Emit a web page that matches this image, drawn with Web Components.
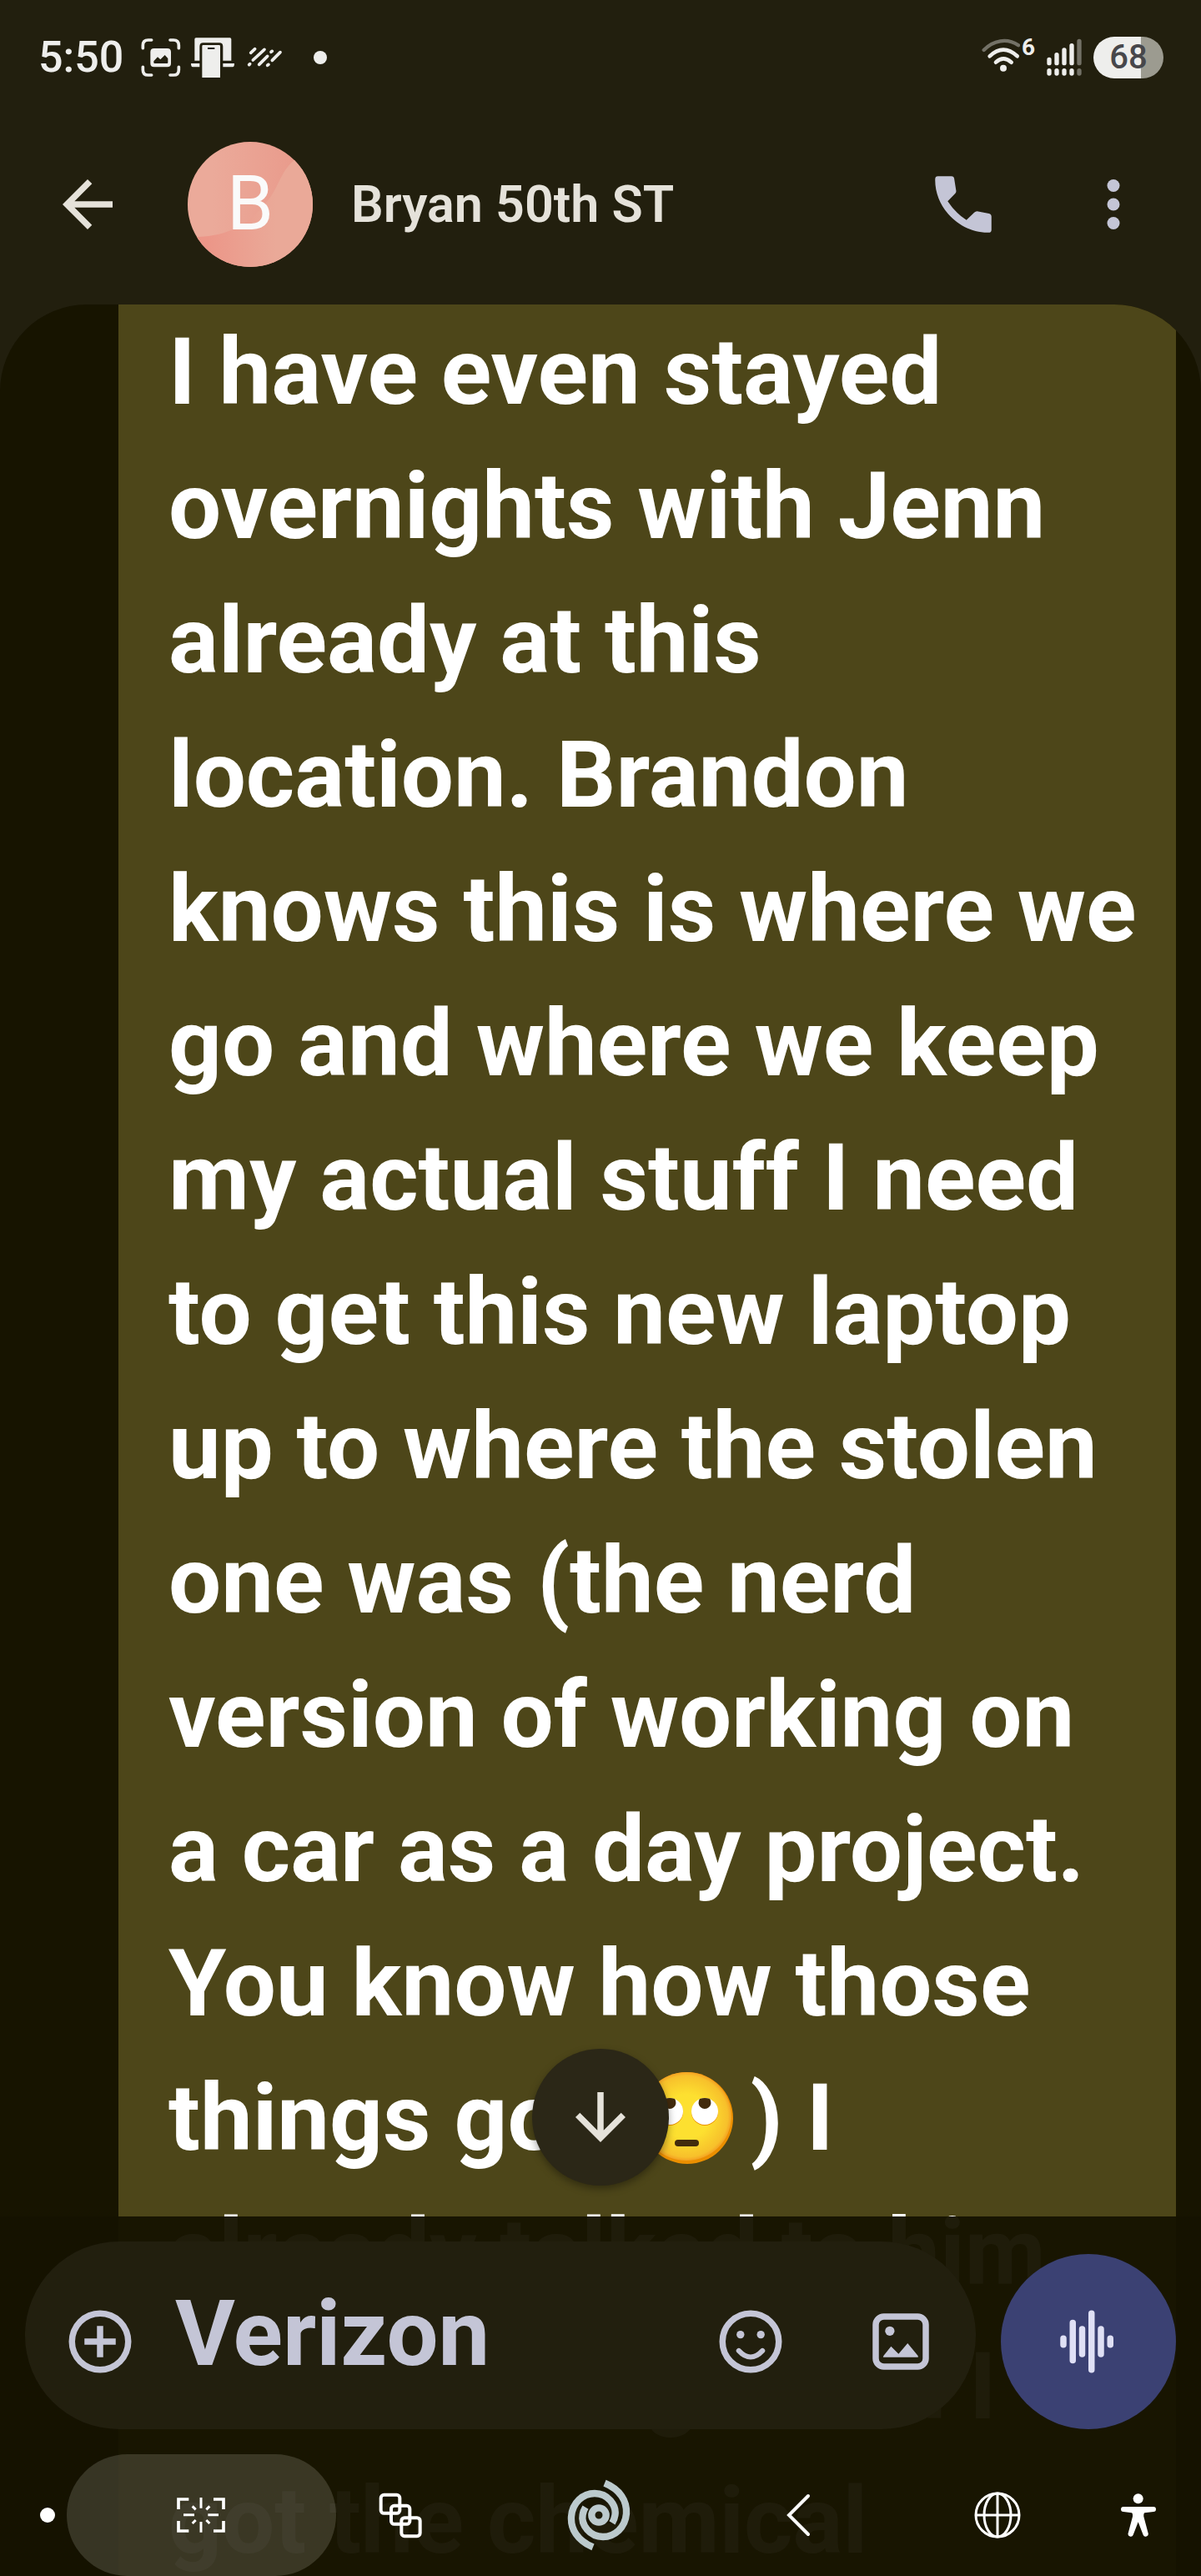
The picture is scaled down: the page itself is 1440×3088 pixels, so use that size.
<!DOCTYPE html>
<html lang="en">
<head>
<meta charset="utf-8">
<meta name="viewport" content="width=device-width, initial-scale=1">
<title>Messages</title>
<style>
body {
    margin: 0;
    background-color: #171400;
    font-family: Roboto, sans-serif;
}
</style>
</head>
<body>
<chat-screen>
    <status-bar slot="status" time="5:50" battery="68"></status-bar>
    <chat-header slot="header" initial="B">Bryan 50th ST</chat-header>
    <message-bubble>I have even stayed<br>overnights with Jenn<br>already at this<br>location. Brandon<br>knows this is where we<br>go and where we keep<br>my actual stuff I need<br>to get this new laptop<br>up to where the stolen<br>one was (the nerd<br>version of working on<br>a car as a day project.<br>You know how those<br>things go<eye-roll></eye-roll>) I<br>already talked to him<br>this morning when I<br>got the chemical</message-bubble>
    <message-composer slot="footer" placeholder="Verizon"></message-composer>
    <nav-bar slot="footer"></nav-bar>
</chat-screen>

<script>
// 24 x 24 icons shared by the header, the composer and the scroll button
const icons = {
    back: '<path d="M20 11H7.83l5.59-5.59L12 4l-8 8 8 8 1.41-1.41L7.83 13H20z"/>',
    down: '<path d="M11 4v12.17l-5.59-5.59L4 12l8 8 8-8-1.41-1.42L13 16.17V4z"/>',
    call: '<path d="M3.9 3H8.2Q9 3 9.1 3.8L9.7 7.6Q9.8 8.1 9.4 8.5L7 11Q9.5 14.8 13 17L15.5 14.6Q15.9 14.2 16.4 14.2L20.2 14.9Q21 15.1 21 15.9V20.1Q21 21 20.1 21C10.8 21.2 2.8 13 3 3.9Q3 3 3.9 3z"/>',
    more: '<circle cx="12" cy="6" r="2"/><circle cx="12" cy="12" r="2"/><circle cx="12" cy="18" r="2"/>',
    add: '<path d="M11 17h2v-4h4v-2h-4V7h-2v4H7v2h4zM12 22a10 10 0 1 1 0-20 10 10 0 0 1 0 20zm0-2a8 8 0 1 0 0-16 8 8 0 0 0 0 16z"/>',
    smile: '<circle cx="12" cy="12" r="9" fill="none" stroke="currentColor" stroke-width="2"/><circle cx="8.75" cy="9.75" r="1.25"/><circle cx="15.25" cy="9.75" r="1.25"/><path d="M8.2 14.9Q12 19 15.8 14.9" fill="none" stroke="currentColor" stroke-width="1.6" stroke-linecap="round"/>',
    image: '<rect x="4" y="4" width="16" height="16" rx="2.6" fill="none" stroke="currentColor" stroke-width="2"/><circle cx="8.5" cy="8.6" r="1.5"/><path d="M6.5 17Q6.2 17 6.5 16.5L8.9 13.5 11.3 15.9 14.2 12.5 17.5 16.5Q17.7 17 17.4 17z"/>',
    voice: '<path d="M4 11v2M7 6v12M10 8v8M13 3v18M16 8v8M19 11v2" fill="none" stroke="currentColor" stroke-width="2" stroke-linecap="round"/>'
};

class UiIcon extends HTMLElement {
    constructor() {
        super();
        this.attachShadow({mode: 'open'});
    }

    connectedCallback() {
        this.shadowRoot.innerHTML = `
<style>
:host { display: block; width: 90px; height: 90px; }
svg { display: block; width: 100%; height: 100%; fill: currentColor; }
</style>
<svg viewBox="0 0 24 24" aria-hidden="true">${icons[this.getAttribute('name')]}</svg>`;
    }
}

// Column page: bars on top, thread below, footer laid over the end of the thread
const screenTemplate = document.createElement('template');

screenTemplate.innerHTML = `
<style>
:host {
    display: flex;
    flex-direction: column;
    position: relative;
    height: 100vh;
    overflow: hidden;
    background-color: #221f0e;
}

main {
    flex: 1;
    min-height: 0;
    overflow: hidden;
    border-radius: 104px 104px 0 0;
    background-color: #171400;
    padding: 0 30px 0 142px;
}

footer {
    position: absolute;
    left: 0;
    right: 0;
    bottom: 0;
    padding-top: 30px;
    background-color: rgba(22, 19, 0, 0.96);
}

#toLatest {
    position: absolute;
    left: 50%;
    bottom: calc(100% + 37px);
    width: 164px;
    height: 164px;
    margin: 0 0 0 -82px;
    padding: 0;
    border: 0;
    border-radius: 50%;
    display: grid;
    place-items: center;
    background-color: #2b2717;
    color: #e5e2da;
    box-shadow: 0 4px 10px rgba(0, 0, 0, 0.35);
}
</style>
<slot name="status"></slot>
<slot name="header"></slot>
<main><slot></slot></main>
<footer>
    <button id="toLatest" aria-label="Scroll to latest"><ui-icon name="down"></ui-icon></button>
    <slot name="footer"></slot>
</footer>
`;

class ChatScreen extends HTMLElement {
    constructor() {
        super();
        this.attachShadow({mode: 'open'});
        this.shadowRoot.appendChild(screenTemplate.content.cloneNode(true));
    }
}

const statusTemplate = document.createElement('template');

statusTemplate.innerHTML = `
<style>
:host {
    display: flex;
    justify-content: space-between;
    align-items: center;
    box-sizing: border-box;
    height: 125px;
    padding: 13px 45px 0 46px;
    color: #eeeeec;
}

.group {
    display: flex;
    align-items: center;
    gap: 12px;
}

.right {
    gap: 14px;
}

#time {
    width: 111px;
    font-size: 52px;
    line-height: 60px;
    font-weight: 500;
}

svg {
    display: block;
    fill: currentColor;
}

.stroke {
    fill: none;
    stroke: currentColor;
    stroke-linecap: round;
}

.wifi {
    display: flex;
    align-items: flex-start;
    gap: 2px;
    height: 48px;
    font-size: 28px;
    line-height: 24px;
    font-weight: 700;
}

#battery {
    width: 84px;
    height: 50px;
    border-radius: 25px;
    background: linear-gradient(90deg, #eeeeec 68%, #9c9b90 68%);
    color: #47474b;
    font-size: 40px;
    line-height: 50px;
    font-weight: 500;
    text-align: center;
}
</style>
<div class="group">
    <span id="time"></span>
    <svg width="48" height="48" viewBox="506 136 144 144">
        <path class="stroke" stroke-width="11" d="M513 174v-10q0-19 19-19h12M611 145h12q19 0 19 19v10M642 242v10q0 19-19 19h-12M544 271h-12q-19 0-19-19v-10"/>
        <path fill-rule="evenodd" d="M553 175h48q13 0 13 13v41q0 13-13 13h-48q-13 0-13-13v-41q0-13 13-13zM552 226q0 3 3 3h45q3 0 3-3v-15l-11-12-16 16-10-9-14 15z"/>
    </svg>
    <svg width="52" height="48" viewBox="687 141 156 144">
        <path d="M705 142h122q5 0 5 5v77h-30v-51q0-13-13-13h-58q-13 0-13 13v51h-18v-77q0-5 5-5z"/>
        <path d="M687 234h31v13h-25q-6 0-6-13zM802 234h41q0 13-6 13h-35z"/>
        <path fill-rule="evenodd" d="M731 168h57q4 0 4 4v113h-65v-113q0-4 4-4zM747 177v6h25v-6z"/>
    </svg>
    <svg width="48" height="48" viewBox="883 141 144 144">
        <path class="stroke" stroke-width="11" d="M906 196l15-14M914 222l41-38M900 239l3-3M936 238l30-30M979 193l4-3M966 241l4-3M983 223l29-29"/>
    </svg>
    <svg width="62" height="48" viewBox="0 0 62 48"><circle cx="31" cy="24" r="8"/></svg>
</div>
<div class="group right">
    <div class="wifi">
        <svg width="46" height="48" viewBox="114 135 138 144">
            <path class="stroke" stroke-width="13" opacity=".4" stroke-linecap="butt" d="M122 180C155 145 205 135 246 163"/>
            <path class="stroke" stroke-width="14" d="M143 202Q192 156 242 202M165 224Q192 198 221 224"/>
            <circle cx="192" cy="245" r="12"/>
        </svg>
        <span>6</span>
    </div>
    <svg width="42" height="48" viewBox="344 135 126 144">
        <g class="stroke" stroke-width="16">
            <path d="M353 214v13M380 197v30M407 180v47M434 164v63M353 254v10M380 254v10M407 254v10M434 254v10"/>
            <path opacity=".4" d="M461 148v79M461 254v10"/>
        </g>
    </svg>
    <div id="battery"></div>
</div>
`;

class StatusBar extends HTMLElement {
    constructor() {
        super();
        this.attachShadow({mode: 'open'});
        this.shadowRoot.appendChild(statusTemplate.content.cloneNode(true));
    }

    connectedCallback() {
        this.shadowRoot.getElementById('time').textContent = this.getAttribute('time');
        this.shadowRoot.getElementById('battery').textContent = this.getAttribute('battery');
    }
}

const headerTemplate = document.createElement('template');

headerTemplate.innerHTML = `
<style>
:host {
    display: flex;
    align-items: center;
    height: 240px;
    padding: 0 15px;
    color: #e5e2da;
}

button {
    display: grid;
    place-items: center;
    width: 180px;
    height: 180px;
    padding: 0;
    border: 0;
    background: none;
    color: #c4c5d6;
}

#back {
    color: inherit;
}

#avatar {
    display: grid;
    width: 150px;
    height: 150px;
    margin: 0 46px 0 30px;
    border-radius: 50%;
    overflow: hidden;
    color: #fafafa;
    font-size: 90px;
    line-height: 150px;
    text-align: center;
}

#avatar > * {
    grid-area: 1 / 1;
}

h1 {
    flex: 1;
    margin: 0;
    font-size: 61px;
    line-height: 72px;
    font-weight: 600;
    white-space: nowrap;
}
</style>
<button id="back" aria-label="Back"><ui-icon name="back"></ui-icon></button>
<div id="avatar">
    <svg width="150" height="150" viewBox="0 0 150 150" aria-hidden="true">
        <defs>
            <linearGradient id="upper"><stop offset=".2" stop-color="#ebaa9a"/><stop offset=".9" stop-color="#e99a8b"/></linearGradient>
            <linearGradient id="lower"><stop offset=".15" stop-color="#ec9688"/><stop offset=".7" stop-color="#eaa998"/></linearGradient>
        </defs>
        <rect width="150" height="150" fill="url(#upper)"/>
        <path d="M0 114C60 116 82 88 98 68C110 52 112 34 130 20L150 0V150H0z" fill="url(#lower)"/>
    </svg>
    <span id="initial"></span>
</div>
<h1><slot></slot></h1>
<button aria-label="Call"><ui-icon name="call"></ui-icon></button>
<button aria-label="More options"><ui-icon name="more"></ui-icon></button>
`;

class ChatHeader extends HTMLElement {
    constructor() {
        super();
        this.attachShadow({mode: 'open'});
        this.shadowRoot.appendChild(headerTemplate.content.cloneNode(true));
    }

    connectedCallback() {
        this.shadowRoot.getElementById('initial').textContent = this.getAttribute('initial');
    }
}

const bubbleTemplate = document.createElement('template');

bubbleTemplate.innerHTML = `
<style>
:host {
    display: block;
    padding: 0 0 0 60px;
    background-color: #4d4619;
    color: white;
}

p {
    margin: 0;
    font-size: 112px;
    line-height: 161px;
    font-weight: 700;
    white-space: nowrap;
}
</style>
<p><slot></slot></p>
`;

class MessageBubble extends HTMLElement {
    constructor() {
        super();
        this.attachShadow({mode: 'open'});
        this.shadowRoot.appendChild(bubbleTemplate.content.cloneNode(true));
    }
}

const eyeRollTemplate = document.createElement('template');

eyeRollTemplate.innerHTML = `
<style>
:host {
    display: inline-block;
    width: 112px;
    height: 112px;
    margin: 0 20px 0 96px;
    vertical-align: -18px;
}

svg {
    display: block;
}
</style>
<svg width="112" height="112" viewBox="0 0 112 112" role="img" aria-label="Eye roll">
    <defs>
        <radialGradient id="face"><stop offset=".5" stop-color="#fde030"/><stop offset=".92" stop-color="#f7c02b"/><stop offset="1" stop-color="#f4a223"/></radialGradient>
    </defs>
    <circle cx="56" cy="56" r="55" fill="#eb8f00"/>
    <ellipse cx="55" cy="54" rx="54" ry="53" fill="url(#face)"/>
    <circle cx="35" cy="49" r="16" fill="#eb8f00"/>
    <circle cx="77" cy="49" r="16" fill="#eb8f00"/>
    <circle cx="35" cy="48" r="16" fill="white"/>
    <circle cx="77" cy="48" r="16" fill="white"/>
    <path d="M29 33q6-2 12 0a7.5 7.5 0 1 1-12 0zM71 33q6-2 12 0a7.5 7.5 0 1 1-12 0z" fill="#422b0d"/>
    <rect x="41" y="82" width="29" height="8" rx="4" fill="#422b0d"/>
</svg>
`;

class EyeRoll extends HTMLElement {
    constructor() {
        super();
        this.attachShadow({mode: 'open'});
        this.shadowRoot.appendChild(eyeRollTemplate.content.cloneNode(true));
    }
}

const composerTemplate = document.createElement('template');

composerTemplate.innerHTML = `
<style>
:host {
    display: flex;
    align-items: flex-end;
    gap: 30px;
    padding: 0 30px;
    color: #c4c5d6;
}

form {
    flex: 1;
    min-width: 0;
    height: 225px;
    display: flex;
    align-items: flex-end;
    border-radius: 113px;
    background-color: #221f0e;
}

button {
    flex: none;
    display: grid;
    place-items: center;
    width: 180px;
    height: 210px;
    padding: 0;
    border: 0;
    background: none;
    color: inherit;
}

input {
    flex: 1;
    min-width: 0;
    box-sizing: border-box;
    height: 225px;
    padding: 0 0 4px;
    border: 0;
    outline: 0;
    background: none;
    color: inherit;
    font: 700 110px Roboto, sans-serif;
}

input::placeholder {
    color: #c4c5d6;
    opacity: 1;
}

#voice {
    width: 210px;
    border-radius: 50%;
    background-color: #3b4173;
    color: #dfe0f5;
}
</style>
<form>
    <button type="button" aria-label="Add attachment"><ui-icon name="add"></ui-icon></button>
    <input type="text" aria-label="Message">
    <button type="button" aria-label="Emoji"><ui-icon name="smile"></ui-icon></button>
    <button type="button" aria-label="Gallery"><ui-icon name="image"></ui-icon></button>
</form>
<button id="voice" type="button" aria-label="Record voice message"><ui-icon name="voice"></ui-icon></button>
`;

class MessageComposer extends HTMLElement {
    constructor() {
        super();
        this.attachShadow({mode: 'open'});
        this.shadowRoot.appendChild(composerTemplate.content.cloneNode(true));
    }

    connectedCallback() {
        this.shadowRoot.querySelector('input').placeholder = this.getAttribute('placeholder');
    }
}

const navTemplate = document.createElement('template');

navTemplate.innerHTML = `
<style>
:host {
    display: block;
    padding: 30px 25px 0 0;
    color: white;
}

nav {
    display: grid;
    grid-template-columns: 122px repeat(5, 1fr) 100px;
    height: 146px;
}

button {
    display: grid;
    place-items: center;
    padding: 0;
    border: 0;
    background: none;
    color: inherit;
}

#capture {
    margin: 0 -42px;
    border-radius: 73px;
    background-color: rgba(255, 255, 240, 0.15);
}

#dot {
    justify-self: start;
    align-self: center;
    width: 18px;
    height: 18px;
    margin-left: 48px;
    border-radius: 50%;
    background-color: white;
}

svg {
    fill: none;
    stroke: currentColor;
}

#swirl {
    color: #bccacd;
}
</style>
<nav>
    <span id="dot"></span>
    <button id="capture" aria-label="Capture">
        <svg width="58" height="42" viewBox="0 0 174 126" stroke-width="11">
            <path d="M6 42V6H43M132 6H168V42M168 84V120H132M43 120H6V84"/>
            <path stroke-width="9" d="M87 0V38M87 87V125M24 62H63M112 62H150M56 31L68 43M118 31L106 43M56 93L68 81M118 93L106 81"/>
        </svg>
    </button>
    <button aria-label="Recent apps">
        <svg width="52" height="55" viewBox="1180 200 156 164" stroke-width="12">
            <rect x="1188" y="208" width="68" height="66" rx="11"/>
            <rect x="1225" y="247" width="67" height="66" rx="11"/>
            <rect x="1262" y="290" width="67" height="66" rx="11"/>
        </svg>
    </button>
    <button id="swirl" aria-label="Home">
        <svg width="86" height="96" viewBox="44 46 258 288" stroke-width="25">
            <circle cx="173" cy="190" r="26"/>
            <path id="arm" d="M194 75C250 98 275 140 272 185C268 235 230 268 188 268C140 268 108 225 115 188Q117 175 125 162"/>
            <use href="#arm" transform="rotate(180 173 190)"/>
        </svg>
    </button>
    <button aria-label="Back">
        <svg width="30" height="52" viewBox="0 0 30 52" stroke-width="4" stroke-linecap="round"><path d="M27 3L4 26L27 49"/></svg>
    </button>
    <button aria-label="Language">
        <svg width="56" height="56" viewBox="0 0 56 56" stroke-width="3">
            <circle cx="28" cy="28" r="26"/>
            <ellipse cx="28" cy="28" rx="16" ry="26"/>
            <path d="M28 2V54M2 28H54"/>
        </svg>
    </button>
    <button aria-label="Accessibility">
        <svg width="42" height="52" viewBox="675 121 126 156" style="fill: currentColor; stroke: none">
            <circle cx="737" cy="140" r="18"/>
            <path d="M684 169H792a9 9 0 0 1 0 18L760 191Q756 193 757 204L773 264a9.5 9.5 0 0 1-18 6L737 224 719 270a9.5 9.5 0 0 1-18-6L717 204Q718 193 714 191L684 187a9 9 0 0 1 0-18z"/>
        </svg>
    </button>
</nav>
`;

class NavBar extends HTMLElement {
    constructor() {
        super();
        this.attachShadow({mode: 'open'});
        this.shadowRoot.appendChild(navTemplate.content.cloneNode(true));
    }
}

window.customElements.define('ui-icon', UiIcon);
window.customElements.define('eye-roll', EyeRoll);
window.customElements.define('status-bar', StatusBar);
window.customElements.define('chat-header', ChatHeader);
window.customElements.define('message-bubble', MessageBubble);
window.customElements.define('message-composer', MessageComposer);
window.customElements.define('nav-bar', NavBar);
window.customElements.define('chat-screen', ChatScreen);
</script>
</body>
</html>
